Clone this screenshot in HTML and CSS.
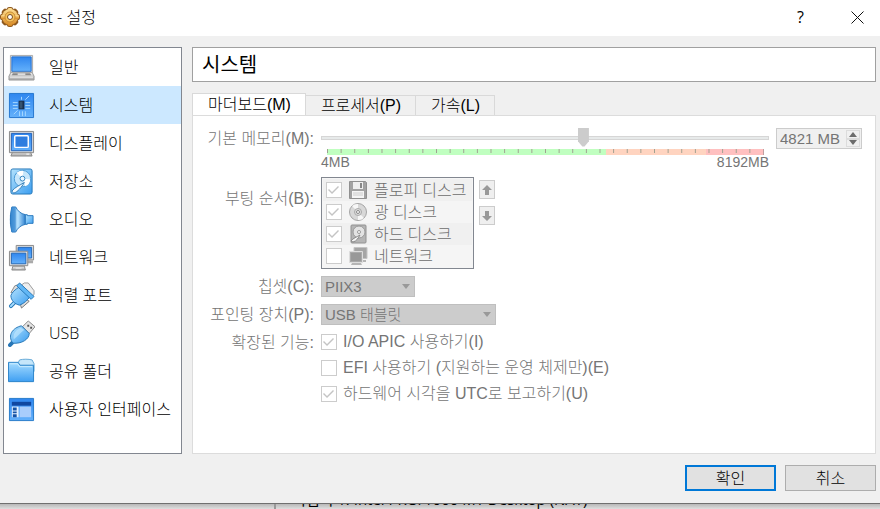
FILE: index.html
```html
<!DOCTYPE html>
<html lang="ko">
<head>
    <meta charset="UTF-8">
    <meta name="viewport" content="width=device-width, initial-scale=1.0">
    <title>test - 설정</title>
    <link rel="stylesheet" href="styles.css">
</head>
<body>
    <svg class="defs" aria-hidden="true">
        <defs>
            <linearGradient id="blue" x1="0" y1="0" x2="0" y2="1">
                <stop offset="0" stop-color="#2f86ef"/>
                <stop offset="1" stop-color="#64b1fb"/>
            </linearGradient>
            <linearGradient id="sky" x1="0" y1="0" x2="1" y2="1">
                <stop offset="0" stop-color="#b5e3fd"/>
                <stop offset="1" stop-color="#3a9df0"/>
            </linearGradient>
            <linearGradient id="folder" x1="0" y1="0" x2="0" y2="1">
                <stop offset="0" stop-color="#a6dcff"/>
                <stop offset="1" stop-color="#3f9ff2"/>
            </linearGradient>
            <linearGradient id="gray" x1="0" y1="0" x2="0" y2="1">
                <stop offset="0" stop-color="#efefef"/>
                <stop offset="1" stop-color="#a9a9a9"/>
            </linearGradient>
            <linearGradient id="gold" x1="0" y1="0" x2="0" y2="1">
                <stop offset="0" stop-color="#ffe095"/>
                <stop offset="1" stop-color="#d98a24"/>
            </linearGradient>
            <linearGradient id="horn" x1="0" y1="0" x2="1" y2="0">
                <stop offset="0" stop-color="#2b7cc9"/>
                <stop offset="0.5" stop-color="#b9e4ff"/>
                <stop offset="1" stop-color="#3182d0"/>
            </linearGradient>
        </defs>
    </svg>

    <main class="dialog">
        <header class="titlebar">
            <svg class="app-icon" viewBox="0 0 20 20">
                <g fill="#8f5a20">
                    <circle cx="10" cy="10" r="9"/>
                    <rect x="7" y="0" width="6" height="20" rx="2"/>
                    <rect x="7" y="0" width="6" height="20" rx="2" transform="rotate(45 10 10)"/>
                    <rect x="7" y="0" width="6" height="20" rx="2" transform="rotate(90 10 10)"/>
                    <rect x="7" y="0" width="6" height="20" rx="2" transform="rotate(135 10 10)"/>
                </g>
                <g fill="url(#gold)">
                    <circle cx="10" cy="10" r="8"/>
                    <rect x="8" y="1" width="4" height="18" rx="1"/>
                    <rect x="1" y="8" width="18" height="4" rx="1"/>
                </g>
                <circle cx="10" cy="10" r="5" fill="#f6c45f" stroke="#c98a35"/>
                <circle cx="10" cy="10" r="2.500" fill="#fff" stroke="#7b4b1c"/>
            </svg>
            <h1>test - 설정</h1>
            <button class="title-button" aria-label="도움말">?</button>
            <button class="title-button" aria-label="닫기">
                <svg width="13" height="13" viewBox="0 0 13 13"><path d="M.5.5l12 12M12.5.5l-12 12" stroke="#111" fill="none"/></svg>
            </button>
        </header>

        <div class="content">
            <nav class="sidebar">
                <a href="#general">
                    <svg viewBox="0 0 28 28">
                        <path d="M2.500 1.500h23v18h-23z" fill="#e2e2e2" stroke="#aaa"/>
                        <path d="M4 3h20v15H4z" fill="url(#blue)" stroke="#236fd0"/>
                        <path d="M3 19h22l2 4v4H1v-4z" fill="url(#gray)" stroke="#999"/>
                        <path d="M5 20h18l1 2H4z" fill="#888"/>
                        <path d="M10 20h8v2h-8z" fill="#ddd"/>
                        <path d="M2 24h24" stroke="#ececec"/>
                    </svg>
                    일반
                </a>
                <a href="#system" class="active">
                    <svg viewBox="0 0 28 28">
                        <path d="M1.500 1.500h25v25h-25z" fill="url(#blue)" stroke="#2476ce"/>
                        <path d="M11 9h6v9h-6z" fill="#172f50"/>
                        <path d="M12 10h3v7h-3z" fill="#36536f"/>
                        <path d="M5 11h5M5 14h5M5 17h5M18 11h5M18 14h5M18 17h5M14 5v3M18 8l4-4M12 20v5M15 20v5M18 20v5M10 19l-4 4" stroke="#a9d9ff" fill="none"/>
                    </svg>
                    시스템
                </a>
                <a href="#display">
                    <svg viewBox="0 0 28 28">
                        <path d="M5 22h18l2 5H3z" fill="url(#gray)" stroke="#888"/>
                        <path d="M1.500 1.500h25v22h-25z" fill="#ddd" stroke="#888"/>
                        <path d="M3.500 3.500h21v18h-21z" fill="url(#blue)" stroke="#2263ba"/>
                        <rect x="7" y="6" width="14" height="12" rx="1" fill="#2e7ddf" stroke="#fff" stroke-width="1.500"/>
                        <path d="M19 25h3" stroke="#fff"/>
                    </svg>
                    디스플레이
                </a>
                <a href="#storage">
                    <svg viewBox="0 0 28 28">
                        <rect x="3" y="1" width="22" height="26" rx="2" fill="url(#sky)" stroke="#2577b7"/>
                        <circle cx="15" cy="11" r="8.500" fill="#c6e6fb" stroke="#4a99d4"/>
                        <path d="M15 11L9 5a8 8 0 0 1 7-2zM15 11l8 1a8 8 0 0 1-5 7z" fill="#fff"/>
                        <circle cx="15" cy="11" r="2.500" fill="#eaf6ff" stroke="#3385bf"/>
                        <path d="M4 24l2 2c4-1 8-6 11-11-5 3-10 5-13 9z" fill="#f3faff" stroke="#347eb7"/>
                    </svg>
                    저장소
                </a>
                <a href="#audio">
                    <svg viewBox="0 0 28 28">
                        <path d="M2 9h2v10H2z" fill="#2765a5"/>
                        <path d="M4 1h4c2 4 5 7 10 8v10c-5 1-8 4-10 8H4c-2-7-2-19 0-26z" fill="url(#horn)" stroke="#2575bb"/>
                        <path d="M18 9h2v1h6v8h-6v1h-2z" fill="url(#sky)" stroke="#2878bd"/>
                        <path d="M4 1h4v26H4c-2-7-2-19 0-26z" fill="#3c8bd3" opacity=".7"/>
                    </svg>
                    오디오
                </a>
                <a href="#network">
                    <svg viewBox="0 0 28 28">
                        <path d="M8.500 1.500h18v15h-18z" fill="#ddd" stroke="#888"/>
                        <path d="M10.500 3.500h14v11h-14z" fill="url(#blue)" stroke="#2368b8"/>
                        <path d="M20 17h6v3h-6z" fill="#aaa"/>
                        <path d="M5 23h12l1 4H4z" fill="url(#gray)" stroke="#888"/>
                        <path d="M1.500 7.500h19v15h-19z" fill="#ddd" stroke="#888"/>
                        <path d="M3.500 9.500h15v11h-15z" fill="url(#blue)" stroke="#2368b8"/>
                        <path d="M8 25h6" stroke="#eee"/>
                    </svg>
                    네트워크
                </a>
                <a href="#serial">
                    <svg viewBox="0 0 28 28">
                        <path d="M14 3l3-2h4l6 8v4l-2 2z" fill="#eee" stroke="#999"/>
                        <path d="M14 27l-1-3 6-6 3 2z" fill="#ddd" stroke="#777"/>
                        <path d="M3 11l4-7 3-1 3 3-4 5z" fill="#ddd" stroke="#888"/>
                        <path d="M3 25l5-5" stroke="#2678b8" stroke-width="4" stroke-linecap="round"/>
                        <path d="M3 25l5-5" stroke="#a6dcff" stroke-width="2" stroke-linecap="round"/>
                        <path d="M12 5C7 8 4 11 3 14c0 5 4 9 9 10 5-2 8-5 11-9z" fill="url(#sky)" stroke="#2678b8"/>
                        <path d="M9 4l3-3 15 14-3 3z" fill="#62b7f5" stroke="#2678b8"/>
                    </svg>
                    직렬 포트
                </a>
                <a href="#usb">
                    <svg viewBox="0 0 28 28">
                        <path d="M15 7l6-6 7 6-6 7z" fill="#e4e4e4" stroke="#888"/>
                        <path d="M20 5h2v2h-2zM23 7h2v2h-2z" fill="#555"/>
                        <path d="M2 26l3-3" stroke="#2776b6" stroke-width="4" stroke-linecap="round"/>
                        <path d="M14 6l8 8c0 6-8 11-17 10C-1 16 5 8 14 6z" fill="url(#sky)" stroke="#2676b4"/>
                        <path d="M13 8c-6 3-8 7-7 12 4-3 7-7 11-10z" fill="#c8ebff" opacity=".6"/>
                    </svg>
                    USB
                </a>
                <a href="#shared">
                    <svg viewBox="0 0 28 28">
                        <path d="M10 6l2-4c4-1 9-1 13 0l2 4v8H10z" fill="#c5e6fa" stroke="#62a8d6"/>
                        <path d="M.5 4.500h10l2 3h14v17H.5z" fill="url(#folder)" stroke="#2b82c9"/>
                        <path d="M2 6h8l2 3h13" stroke="#cdeeff" fill="none"/>
                    </svg>
                    공유 폴더
                </a>
                <a href="#interface">
                    <svg viewBox="0 0 28 28">
                        <path d="M1.500 2.500h25v23h-25z" fill="url(#blue)" stroke="#287bc9"/>
                        <path d="M4 6h20v4H4z" fill="#1047a0"/>
                        <path d="M4 11h7v11H4z" fill="#e6f2ff"/>
                        <path d="M12 11h12v11H12z" fill="#a9cdfc"/>
                        <path d="M5 12h4v3H5zM5 16h4v2H5zM5 19h4v3H5z" fill="#1552a5"/>
                    </svg>
                    사용자 인터페이스
                </a>
            </nav>

            <section class="page">
                <h2>시스템</h2>
                <div class="tabs" role="tablist">
                    <button class="tab active" role="tab" aria-selected="true">마더보드(M)</button>
                    <button class="tab" role="tab" aria-selected="false">프로세서(P)</button>
                    <button class="tab" role="tab" aria-selected="false">가속(L)</button>
                </div>

                <form class="panel" id="settings">
                    <label class="name" for="memory">기본 메모리(M):</label>
                    <div class="memory">
                        <div class="memory-slider">
                            <input type="range" id="memory" min="4" max="8192" value="4821" disabled>
                            <div class="scale"></div>
                            <div class="limits"><span>4MB</span><span>8192MB</span></div>
                        </div>
                        <div class="spinbox">
                            <input type="text" value="4821 MB" aria-label="기본 메모리" disabled>
                            <div class="spin-buttons">
                                <button type="button" aria-label="늘리기" disabled><svg width="8" height="5"><path d="M0 5l4-5 4 5z"/></svg></button>
                                <button type="button" aria-label="줄이기" disabled><svg width="8" height="5"><path d="M0 0l4 5 4-5z"/></svg></button>
                            </div>
                        </div>
                    </div>

                    <span class="name boot-name">부팅 순서(B):</span>
                    <div class="boot">
                        <div class="boot-list">
                            <label>
                                <input type="checkbox" checked disabled>
                                <svg viewBox="0 0 20 20">
                                    <path d="M1.500 1.500h16l1 1v16h-17z" fill="#a2a2a2" stroke="#909090"/>
                                    <path d="M5 2h10v7H5z" fill="#eee"/>
                                    <path d="M12 3h2v5h-2z" fill="#888"/>
                                    <path d="M4 11h12v7H4z" fill="#f5f5f5"/>
                                    <path d="M5 13h10M5 15h10" stroke="#ccc"/>
                                </svg>
                                플로피 디스크
                            </label>
                            <label>
                                <input type="checkbox" checked disabled>
                                <svg viewBox="0 0 20 20">
                                    <circle cx="10" cy="10" r="8.500" fill="#d8d8d8" stroke="#a5a5a5"/>
                                    <path d="M10 10L4 4a8 8 0 0 1 6-2zM10 10l6 6a8 8 0 0 1-6 2z" fill="#f7f7f7"/>
                                    <circle cx="10" cy="10" r="3.500" fill="#ddd" stroke="#aaa"/>
                                    <circle cx="10" cy="10" r="1.500" fill="#fff" stroke="#888"/>
                                </svg>
                                광 디스크
                            </label>
                            <label>
                                <input type="checkbox" checked disabled>
                                <svg viewBox="0 0 20 20">
                                    <rect x="3" y="1" width="15" height="18" rx="1" fill="#b5b5b5" stroke="#929292"/>
                                    <circle cx="11" cy="8" r="6" fill="#e3e3e3" stroke="#999"/>
                                    <circle cx="11" cy="8" r="1.500" fill="#fff" stroke="#999"/>
                                    <path d="M3 17l2 1c4-1 5-4 7-7-3 2-7 3-9 6z" fill="#f3f3f3" stroke="#888"/>
                                </svg>
                                하드 디스크
                            </label>
                            <label>
                                <input type="checkbox" disabled>
                                <svg viewBox="0 0 20 20">
                                    <path d="M6 1.500h13v11H6z" fill="#a5a5a5" stroke="#c4c4c4"/>
                                    <path d="M15 14h3v2h-3zM4 17h9l1 2H3z" fill="#b5b5b5"/>
                                    <path d="M1.500 5.500h13v11h-13z" fill="#aaa" stroke="#ddd"/>
                                    <path d="M3 7h10v8H3z" fill="#999"/>
                                </svg>
                                네트워크
                            </label>
                        </div>
                        <div class="order-buttons">
                            <button type="button" aria-label="위로" disabled><svg width="10" height="10"><path d="M5 0l5 5H7v5H3V5H0z"/></svg></button>
                            <button type="button" aria-label="아래로" disabled><svg width="10" height="10"><path d="M5 10l5-5H7V0H3v5H0z"/></svg></button>
                        </div>
                    </div>

                    <label class="name" for="chipset">칩셋(C):</label>
                    <div class="select chipset">
                        <select id="chipset" disabled><option>PIIX3</option></select>
                    </div>

                    <label class="name" for="pointing">포인팅 장치(P):</label>
                    <div class="select pointing">
                        <select id="pointing" disabled><option>USB 태블릿</option></select>
                    </div>

                    <span class="name">확장된 기능:</span>
                    <div class="features">
                        <label><input type="checkbox" checked disabled>I/O APIC 사용하기(I)</label>
                        <label><input type="checkbox" disabled>EFI 사용하기 (지원하는 운영 체제만)(E)</label>
                        <label><input type="checkbox" checked disabled>하드웨어 시각을 UTC로 보고하기(U)</label>
                    </div>
                </form>
            </section>
        </div>

        <footer class="actions">
            <button class="primary" form="settings">확인</button>
            <button type="button">취소</button>
        </footer>
    </main>

    <div class="behind">
        <p>어댑터 1: Intel PRO/1000 MT Desktop (NAT)</p>
    </div>
</body>
</html>
```
FILE: styles.css
```css
* {
    box-sizing: border-box;
}

body {
    margin: 0;
    height: 100vh;
    display: flex;
    flex-direction: column;
    font-family: "Open Sans", "Noto Sans CJK KR", sans-serif;
    font-size: 16px;
    line-height: 20px;
    color: #000;
    background: #dcdcdc;
}

button,
input,
select {
    font: inherit;
    color: inherit;
    margin: 0;
    padding: 0;
}

svg {
    display: block;
    flex: none;
}

.defs {
    position: absolute;
    width: 0;
    height: 0;
}

.dialog {
    flex: 1;
    display: flex;
    flex-direction: column;
    background: #f0f0f0;
    border-bottom: 1px solid #707070;
}

/* title bar */
.titlebar {
    display: flex;
    align-items: center;
    height: 36px;
    padding-bottom: 2px;
    background: #fff;
}

.app-icon {
    width: 20px;
    height: 20px;
    margin-right: 6px;
}

h1 {
    flex: 1;
    margin: 0;
    font-size: 16px;
    font-weight: 300;
}

.title-button {
    display: flex;
    align-items: center;
    justify-content: center;
    width: 45px;
    height: 34px;
    border: 0;
    background: none;
}

.title-button + .title-button {
    margin-left: 12px;
}

/* layout */
.content {
    flex: 1;
    display: flex;
    gap: 10px;
    padding: 11px 4px 0 3px;
}

.sidebar {
    width: 179px;
    flex: none;
    border: 1px solid #828790;
    background: #fff;
    font-weight: 300;
}

.sidebar a {
    display: flex;
    align-items: center;
    gap: 14px;
    height: 38px;
    padding-left: 4px;
    color: #000;
    text-decoration: none;
    white-space: nowrap;
}

.sidebar a.active {
    background: #cce8ff;
}

.sidebar svg {
    width: 27px;
    height: 27px;
}

.page {
    flex: 1;
    min-width: 0;
    display: flex;
    flex-direction: column;
}

h2 {
    margin: 0 0 11px;
    height: 35px;
    padding-left: 9px;
    border: 1px solid #a0a0a0;
    background: #fff;
    font-size: 20px;
    font-weight: 400;
    line-height: 34px;
}

/* tabs */
.tabs {
    display: flex;
    align-items: flex-end;
    height: 23px;
    margin-bottom: -1px;
}

.tab {
    height: 21px;
    padding: 0 14px 0 15px;
    border: 1px solid #d9d9d9;
    border-left: 0;
    background: #f0f0f0;
    font-family: "Liberation Sans", "Noto Sans CJK KR", sans-serif;
    font-weight: 300;
    line-height: 18px;
}

.tab.active {
    height: 23px;
    border-left: 1px solid #d9d9d9;
    border-bottom: 0;
    background: #fff;
}

/* form */
.panel {
    flex: 1;
    display: grid;
    grid-template-columns: 110px minmax(0, 1fr);
    gap: 7px;
    align-content: start;
    padding: 12px 13px 0 11px;
    border: 1px solid #dcdcdc;
    background: #fff;
    color: #757575;
    font-family: "Liberation Sans", "Noto Sans CJK KR", sans-serif;
    font-weight: 300;
}

.name {
    line-height: 21px;
    text-align: right;
    white-space: nowrap;
}

.boot-name {
    padding-top: 11px;
}

.memory {
    display: flex;
    align-items: flex-start;
    gap: 7px;
}

.memory-slider {
    flex: 1;
}

.memory-slider input {
    appearance: none;
    display: block;
    width: 100%;
    height: 19px;
    background: none;
}

.memory-slider input::-webkit-slider-runnable-track {
    height: 4px;
    border: 1px solid #d6d6d6;
    background: #e7eaea;
}

.memory-slider input::-webkit-slider-thumb {
    appearance: none;
    width: 11px;
    height: 19px;
    margin-top: -9px;
    background: #ccc;
    clip-path: polygon(0 0, 100% 0, 100% 72%, 60% 100%, 40% 100%, 0 72%);
}

.scale {
    height: 6px;
    margin: 2px 5px 0 6px;
    background:
        linear-gradient(to right, #a0a090 1px, transparent 1px) 0 0 / calc(100% / 32) 4px repeat-x,
        linear-gradient(to right, #c0ffc0 64%, #ffd4c0 64% 87%, #ffc0c0 87%);
    border-right: 1px solid #c0a0a0;
}

.limits {
    display: flex;
    justify-content: space-between;
    font-size: 14px;
    line-height: 15px;
}

.spinbox {
    display: flex;
    width: 86px;
    height: 21px;
    padding: 1px;
    border: 1px solid #ccc;
    background: #f0f0f0;
}

.spinbox input {
    flex: 1;
    min-width: 0;
    padding-left: 2px;
    border: 0;
    background: none;
    font-size: 15px;
}

.spin-buttons {
    width: 14px;
    display: flex;
    flex-direction: column;
}

.spin-buttons button {
    flex: 1;
    display: flex;
    align-items: center;
    justify-content: center;
    border: 1px solid #dcdcdc;
    background: #f0f0f0;
}

.spin-buttons path {
    fill: #6d6d6d;
}

/* boot order */
.boot {
    display: flex;
    align-items: flex-start;
    gap: 5px;
}

.boot-list {
    width: 153px;
    padding: 1px;
    border: 1px solid #828790;
    background: #f5f5f5;
    color: #6d6d6d;
    font-family: "Open Sans", "Noto Sans CJK KR", sans-serif;
}

.boot-list label {
    display: flex;
    align-items: center;
    gap: 6px;
    height: 22px;
    padding-left: 3px;
    white-space: nowrap;
}

.boot-list label:nth-child(odd) {
    background: #f0f0f0;
}

.boot-list svg {
    width: 20px;
    height: 20px;
}

.order-buttons {
    display: flex;
    flex-direction: column;
    gap: 7px;
    padding-top: 3px;
}

.order-buttons button {
    display: flex;
    align-items: center;
    justify-content: center;
    width: 16px;
    height: 19px;
    border: 1px solid #ccc;
    background: #efefef;
}

.order-buttons path {
    fill: #999;
}

input[type="checkbox"] {
    appearance: none;
    flex: none;
    width: 16px;
    height: 16px;
    border: 1px solid #ccc;
    background: #fff;
}

input[type="checkbox"]:checked::before {
    content: "";
    display: block;
    width: 14px;
    height: 14px;
    background: #c4c4c4;
    clip-path: polygon(1px 7px, 2px 6px, 5px 9px, 11px 3px, 12px 4px, 5px 11px);
}

/* drop-downs */
.select {
    position: relative;
    height: 21px;
}

.chipset {
    width: 94px;
}

.pointing {
    width: 175px;
}

.select select {
    appearance: none;
    display: block;
    width: 100%;
    height: 21px;
    padding-left: 3px;
    border: 1px solid #bfbfbf;
    border-radius: 0;
    background: #ccc;
    font-size: 15px;
    line-height: 19px;
    opacity: 1;
}

.select::after {
    content: "";
    position: absolute;
    top: 8px;
    right: 5px;
    border: 4px solid transparent;
    border-top: 5px solid #999;
    border-bottom: 0;
}

.features {
    display: flex;
    flex-direction: column;
    gap: 6px;
}

.features label {
    display: flex;
    align-items: center;
    gap: 6px;
    height: 20px;
    white-space: nowrap;
}

/* dialog buttons */
.actions {
    display: flex;
    justify-content: flex-end;
    gap: 9px;
    padding: 11px 4px 12px;
}

.actions button {
    width: 91px;
    height: 26px;
    border: 1px solid #adadad;
    background: #e1e1e1;
    font-weight: 300;
}

.actions .primary {
    border: 2px solid #0078d7;
}

/* window below the dialog */
.behind {
    height: 5px;
    overflow: hidden;
    background: linear-gradient(#b8b8b8, #dedede);
}

.behind p {
    margin: -15px 0 0 274px;
    padding-left: 16px;
    border-left: 2px solid #999;
    font-size: 15px;
    white-space: nowrap;
}
```
